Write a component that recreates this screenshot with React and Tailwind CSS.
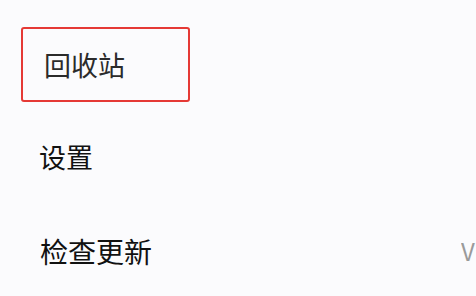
export default function App() {
  return (
    <div
      className="w-[476px] h-[296px] overflow-hidden bg-[#fbfbfd] flex flex-col"
      style={{ fontFamily: '"Noto Sans CJK SC", "Noto Sans", sans-serif' }}
    >
      <div className="mt-[27px] ml-[21px] w-[169px] h-[75px] shrink-0 border-2 border-[#e53935] rounded-[3px] flex items-center pl-[21px]">
        <span className="text-[27px] leading-none text-[#2b2b2b]">回收站</span>
      </div>
      <div className="mt-[8px] h-[92px] shrink-0 flex items-center pl-[39px]">
        <span className="text-[27px] leading-none text-[#111111]">设置</span>
      </div>
      <div className="mt-[3px] h-[92px] shrink-0 flex items-center justify-between pl-[40px]">
        <span className="text-[28px] leading-none text-[#111111]">检查更新</span>
        <span className="text-[24px] leading-none text-[#9a9a9a] whitespace-nowrap w-[15px] overflow-hidden">V1.0.0</span>
      </div>
    </div>
  );
}
